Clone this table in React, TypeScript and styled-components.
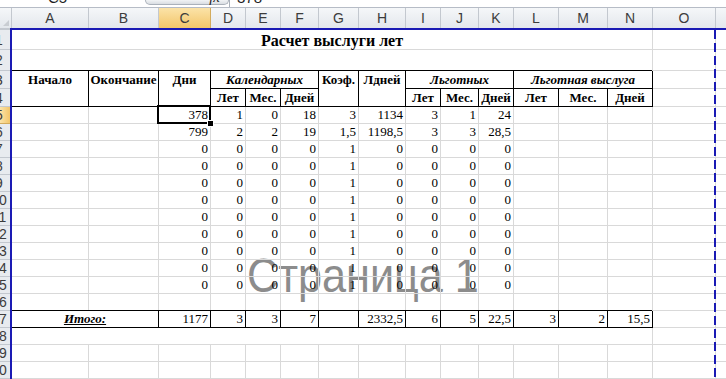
import React from 'react';
import styled, { createGlobalStyle, css } from 'styled-components';

type Align = 'left' | 'center' | 'right';

interface CellData {
  text?: string;
  span?: number;
  rows?: number;
  align?: Align;
  bold?: boolean;
  italic?: boolean;
  underline?: boolean;
  boxed?: boolean;
  top?: boolean;
  title?: boolean;
  selected?: boolean;
}

const GRID = '#d9d9d9';
const HEAD_LINE = '#c3c8cf';
const PAGE_BLUE = '#1a1ab4';

// widths include the right gridline
const COLS = [77, 70, 52, 35, 35, 38, 40, 47, 35, 38, 35, 45, 49, 45, 63, 60];
const COL_NAMES = 'ABCDEFGHIJKLMNOP'.split('');
const ROW_HEIGHTS = [20, 21, 18, 18, ...Array(16).fill(17)];

const num = (text: string, extra: Partial<CellData> = {}): CellData => ({ text, align: 'right', ...extra });
const head = (text: string, extra: Partial<CellData> = {}): CellData => ({
  text,
  align: 'center',
  bold: true,
  top: true,
  boxed: true,
  ...extra,
});
const blanks = (n: number): CellData[] => Array.from({ length: n }, () => ({}));

const valuesRow = (vals: string[], selectFirst = false): CellData[] => [
  ...blanks(2),
  ...vals.map((v, i) => num(v, { selected: selectFirst && i === 0 })),
  ...blanks(5),
];

const zeros = ['0', '0', '0', '0', '1', '0', '0', '0', '0'];

const sheet: CellData[][] = [
  [{ text: 'Расчет выслуги лет', span: 14, align: 'center', bold: true, title: true, top: true }, ...blanks(2)],
  [{ span: 14 }, ...blanks(2)],
  [
    head('Начало', { rows: 2 }),
    head('Окончание', { rows: 2 }),
    head('Дни', { rows: 2 }),
    head('Календарных', { span: 3, italic: true }),
    head('Коэф.', { rows: 2 }),
    head('Лдней', { rows: 2 }),
    head('Льготных', { span: 3, italic: true }),
    head('Льготная выслуга', { span: 3, italic: true }),
    ...blanks(2),
  ],
  [
    ...['Лет', 'Мес.', 'Дней', 'Лет', 'Мес.', 'Дней', 'Лет', 'Мес.', 'Дней'].map((t) => head(t)),
    ...blanks(2),
  ],
  valuesRow(['378', '1', '0', '18', '3', '1134', '3', '1', '24'], true),
  valuesRow(['799', '2', '2', '19', '1,5', '1198,5', '3', '3', '28,5']),
  ...Array.from({ length: 9 }, () => valuesRow(zeros)),
  blanks(16),
  [
    { text: 'Итого:', span: 2, align: 'center', bold: true, italic: true, underline: true, boxed: true },
    ...['1177', '3', '3', '7', '', '2332,5', '6', '5', '22,5', '3', '2', '15,5'].map((t) => num(t, { boxed: true })),
    ...blanks(2),
  ],
  [{ span: 14 }, ...blanks(2)],
  blanks(16),
  blanks(16),
];

const GlobalStyle = createGlobalStyle`
  html, body {
    margin: 0;
    padding: 0;
    background: #fff;
    overflow: hidden;
  }
`;

const Window = styled.div`
  width: 726px;
  height: 379px;
  display: flex;
  flex-direction: column;
  overflow: hidden;
  background: #fff;
`;

const FormulaBar = styled.div`
  display: flex;
  flex: 0 0 7px;
  border-bottom: 1px solid #b6bcc6;
  overflow: hidden;
  font-family: 'Liberation Sans', Arial, sans-serif;
  font-size: 15px;
  color: #1e1e1e;
`;

const NameBox = styled.div`
  flex: 0 0 145px;
  box-sizing: border-box;
  padding-left: 48px;
`;

const FxButtons = styled.div`
  flex: 0 0 84px;
  height: 5px;
  box-sizing: border-box;
  display: flex;
  justify-content: flex-end;
  padding-right: 8px;
  border: 1px solid #aab1ba;
  border-top: none;
  border-radius: 0 0 6px 6px;
  background: linear-gradient(#f1f3f5, #d9dde2);
  font-family: 'Liberation Serif', serif;
  font-style: italic;
`;

const FormulaInput = styled.div`
  flex: 1;
  border-left: 1px solid #aab1ba;
  padding-left: 7px;
`;

const Peek = styled.span`
  display: block;
  line-height: 15px;
  margin-top: -10px;
`;

const HeaderRow = styled.div`
  display: flex;
  flex: 0 0 20px;
  overflow: hidden;
`;

const headBg = (active?: boolean) =>
  active ? 'linear-gradient(#fbe3a8, #f3c66a)' : 'linear-gradient(#f5f7f9, #e3e7ec)';

const Corner = styled.div`
  position: relative;
  flex: 0 0 12px;
  box-sizing: border-box;
  border-right: 1px solid ${HEAD_LINE};
  background: ${headBg()};

  &::after {
    content: '';
    position: absolute;
    right: 2px;
    bottom: 2px;
    border-left: 6px solid transparent;
    border-bottom: 6px solid #c9cdd2;
  }
`;

const ColHead = styled.div<{ $w: number; $active?: boolean }>`
  flex: 0 0 ${(p) => p.$w}px;
  box-sizing: border-box;
  display: flex;
  align-items: flex-end;
  justify-content: center;
  padding-bottom: 2px;
  border-right: 1px solid ${(p) => (p.$active ? '#d3ab5c' : HEAD_LINE)};
  background: ${(p) => headBg(p.$active)};
  font-family: 'Liberation Sans', Arial, sans-serif;
  font-size: 14px;
  line-height: 16px;
  color: #3c3c3c;
`;

const Main = styled.div`
  display: flex;
  flex: 1;
  min-height: 0;
`;

const RowHeads = styled.div`
  flex: 0 0 10px;
  display: flex;
  flex-direction: column;
  border-top: 2px solid ${HEAD_LINE};
  overflow: hidden;
`;

const RowHead = styled.div<{ $h: number; $active?: boolean }>`
  flex: 0 0 ${(p) => p.$h}px;
  box-sizing: border-box;
  display: flex;
  align-items: center;
  border-bottom: 1px solid ${(p) => (p.$active ? '#d3ab5c' : HEAD_LINE)};
  background: ${(p) => (p.$active ? 'linear-gradient(90deg, #fbe3a8, #f3c66a)' : '#e8ebef')};
  font-family: 'Liberation Sans', Arial, sans-serif;
  font-size: 14px;
  color: #3c3c3c;
`;

// the header column is cut by the screenshot edge: only its right half shows
const RowNum = styled.span`
  flex: 0 0 20px;
  margin-left: -11px;
  text-align: center;
`;

const Sheet = styled.div`
  position: relative;
  z-index: 0;
  flex: 1;
  min-width: 0;
  display: grid;
  grid-template-columns: ${COLS.map((w) => `${w}px`).join(' ')};
  grid-template-rows: ${ROW_HEIGHTS.map((h) => `${h}px`).join(' ')};
  border-top: 2px solid ${PAGE_BLUE};
  border-left: 2px solid ${PAGE_BLUE};
  overflow: hidden;
`;

const Cell = styled.div<{
  $align: Align;
  $span: number;
  $rows: number;
  $bold?: boolean;
  $italic?: boolean;
  $underline?: boolean;
  $boxed?: boolean;
  $top?: boolean;
  $title?: boolean;
  $selected?: boolean;
}>`
  position: relative;
  z-index: ${(p) => (p.$selected ? 3 : 1)};
  grid-column: span ${(p) => p.$span};
  grid-row: span ${(p) => p.$rows};
  box-sizing: border-box;
  min-width: 0;
  display: flex;
  align-items: ${(p) => (p.$top ? 'flex-start' : 'center')};
  justify-content: ${(p) => (p.$align === 'right' ? 'flex-end' : p.$align === 'center' ? 'center' : 'flex-start')};
  padding: ${(p) => (p.$top ? '1px 2px 0' : '0 2px')};
  border-right: 1px solid ${(p) => (p.$boxed ? '#000' : GRID)};
  border-bottom: 1px solid ${(p) => (p.$boxed ? '#000' : GRID)};
  box-shadow: ${(p) => (p.$boxed ? '-1px -1px 0 #000' : 'none')};
  font-family: 'Liberation Serif', 'Times New Roman', serif;
  font-size: ${(p) => (p.$title ? 16 : 13)}px;
  line-height: ${(p) => (p.$title ? 19 : 16)}px;
  font-weight: ${(p) => (p.$bold ? 700 : 400)};
  font-style: ${(p) => (p.$italic ? 'italic' : 'normal')};
  text-decoration: ${(p) => (p.$underline ? 'underline' : 'none')};
  white-space: nowrap;
  color: #000;

  ${(p) =>
    p.$selected &&
    css`
      &::after {
        content: '';
        position: absolute;
        left: -2px;
        top: -2px;
        right: -1px;
        bottom: -1px;
        border: 2px solid #000;
      }
      &::before {
        content: '';
        position: absolute;
        right: -4px;
        bottom: -4px;
        width: 5px;
        height: 5px;
        background: #000;
        border: 1px solid #fff;
        z-index: 1;
      }
    `}
`;

const PageLabel = styled.div`
  position: absolute;
  left: 235px;
  top: 222px;
  z-index: 0;
  font-family: 'Liberation Sans', Arial, sans-serif;
  font-size: 48px;
  line-height: 48px;
  color: #8c8c8c;
  white-space: nowrap;
  transform: scaleX(0.9);
  transform-origin: left top;
`;

const PageBreak = styled.div`
  position: absolute;
  left: 702px;
  top: 0;
  bottom: 0;
  width: 2px;
  z-index: 4;
  background: repeating-linear-gradient(to bottom, ${PAGE_BLUE} 0 9px, transparent 9px 13px);
`;

const App: React.FC = () => {
  return (
    <Window>
      <GlobalStyle />
      <FormulaBar>
        <NameBox>
          <Peek>C5</Peek>
        </NameBox>
        <FxButtons>
          <Peek>fx</Peek>
        </FxButtons>
        <FormulaInput>
          <Peek>378</Peek>
        </FormulaInput>
      </FormulaBar>

      <HeaderRow>
        <Corner />
        {COL_NAMES.map((name, i) => (
          <ColHead key={name} $w={COLS[i]} $active={name === 'C'}>
            {name}
          </ColHead>
        ))}
      </HeaderRow>

      <Main>
        <RowHeads>
          {ROW_HEIGHTS.map((h, i) => (
            <RowHead key={i} $h={h} $active={i === 4}>
              <RowNum>{i + 1}</RowNum>
            </RowHead>
          ))}
        </RowHeads>

        <Sheet>
          <PageLabel>Страница 1</PageLabel>
          {sheet.map((row, r) =>
            row.map((cell, c) => (
              <Cell
                key={`${r}-${c}`}
                $align={cell.align ?? 'left'}
                $span={cell.span ?? 1}
                $rows={cell.rows ?? 1}
                $bold={cell.bold}
                $italic={cell.italic}
                $underline={cell.underline}
                $boxed={cell.boxed}
                $top={cell.top}
                $title={cell.title}
                $selected={cell.selected}
              >
                {cell.text}
              </Cell>
            )),
          )}
          <PageBreak />
        </Sheet>
      </Main>
    </Window>
  );
};

export default App;
